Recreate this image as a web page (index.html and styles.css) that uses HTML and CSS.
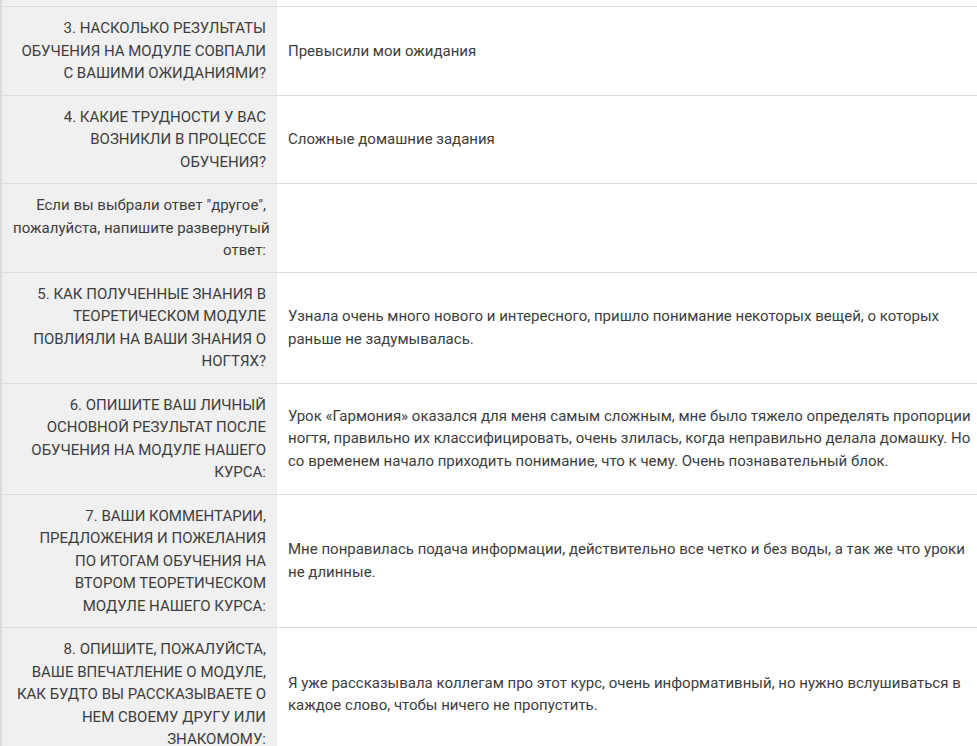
FILE: index.html
```html
<!DOCTYPE html>
<html lang="ru">
<head>
  <meta charset="UTF-8" />
  <meta name="viewport" content="width=device-width, initial-scale=1.0"/>
  <title>Анкета по модулю</title>
  <link rel="stylesheet" href="styles.css">
</head>
<body>
  <table class="answers">
    <colgroup>
      <col class="col-question" />
      <col />
    </colgroup>
    <tbody>
      <tr class="cut">
        <th></th>
        <td></td>
      </tr>
      <tr>
        <th>3. НАСКОЛЬКО РЕЗУЛЬТАТЫ<br>ОБУЧЕНИЯ НА МОДУЛЕ СОВПАЛИ<br>С ВАШИМИ ОЖИДАНИЯМИ?</th>
        <td>Превысили мои ожидания</td>
      </tr>
      <tr>
        <th>4. КАКИЕ ТРУДНОСТИ У ВАС<br>ВОЗНИКЛИ В ПРОЦЕССЕ<br>ОБУЧЕНИЯ?</th>
        <td>Сложные домашние задания</td>
      </tr>
      <tr>
        <th>Если вы выбрали ответ "другое",<br>пожалуйста, напишите развернутый<br>ответ:</th>
        <td></td>
      </tr>
      <tr>
        <th>5. КАК ПОЛУЧЕННЫЕ ЗНАНИЯ В<br>ТЕОРЕТИЧЕСКОМ МОДУЛЕ<br>ПОВЛИЯЛИ НА ВАШИ ЗНАНИЯ О<br>НОГТЯХ?</th>
        <td>Узнала очень много нового и интересного, пришло понимание некоторых вещей, о которых<br>раньше не задумывалась.</td>
      </tr>
      <tr>
        <th>6. ОПИШИТЕ ВАШ ЛИЧНЫЙ<br>ОСНОВНОЙ РЕЗУЛЬТАТ ПОСЛЕ<br>ОБУЧЕНИЯ НА МОДУЛЕ НАШЕГО<br>КУРСА:</th>
        <td>Урок «Гармония» оказался для меня самым сложным, мне было тяжело определять пропорции<br>ногтя, правильно их классифицировать, очень злилась, когда неправильно делала домашку. Но<br>со временем начало приходить понимание, что к чему. Очень познавательный блок.</td>
      </tr>
      <tr>
        <th>7. ВАШИ КОММЕНТАРИИ,<br>ПРЕДЛОЖЕНИЯ И ПОЖЕЛАНИЯ<br>ПО ИТОГАМ ОБУЧЕНИЯ НА<br>ВТОРОМ ТЕОРЕТИЧЕСКОМ<br>МОДУЛЕ НАШЕГО КУРСА:</th>
        <td>Мне понравилась подача информации, действительно все четко и без воды, а так же что уроки<br>не длинные.</td>
      </tr>
      <tr>
        <th>8. ОПИШИТЕ, ПОЖАЛУЙСТА,<br>ВАШЕ ВПЕЧАТЛЕНИЕ О МОДУЛЕ,<br>КАК БУДТО ВЫ РАССКАЗЫВАЕТЕ О<br>НЕМ СВОЕМУ ДРУГУ ИЛИ<br>ЗНАКОМОМУ:</th>
        <td>Я уже рассказывала коллегам про этот курс, очень информативный, но нужно вслушиваться в<br>каждое слово, чтобы ничего не пропустить.</td>
      </tr>
    </tbody>
  </table>
</body>
</html>
```

FILE: styles.css
```css
body {
  margin: 0;
  background: #fff;
  font-family: "Roboto", "Liberation Sans", sans-serif;
  font-size: 15px;
  line-height: 22.5px;
  color: #3d3d3d;
}

.answers {
  width: 100%;
  border-collapse: collapse;
  table-layout: fixed;
  border-left: 2px solid #dcdcdc;
}

.col-question {
  width: 276px;
}

.answers th,
.answers td {
  padding: 10px 11px;
  border-top: 1px solid #dcdcdc;
  vertical-align: middle;
  white-space: nowrap;
}

.answers th {
  background: #f0f0f0;
  font-weight: normal;
  text-align: right;
}

.answers td {
  text-align: left;
}

.answers tr.cut th,
.answers tr.cut td {
  height: 6px;
  padding: 0;
  border-top: none;
}
```
